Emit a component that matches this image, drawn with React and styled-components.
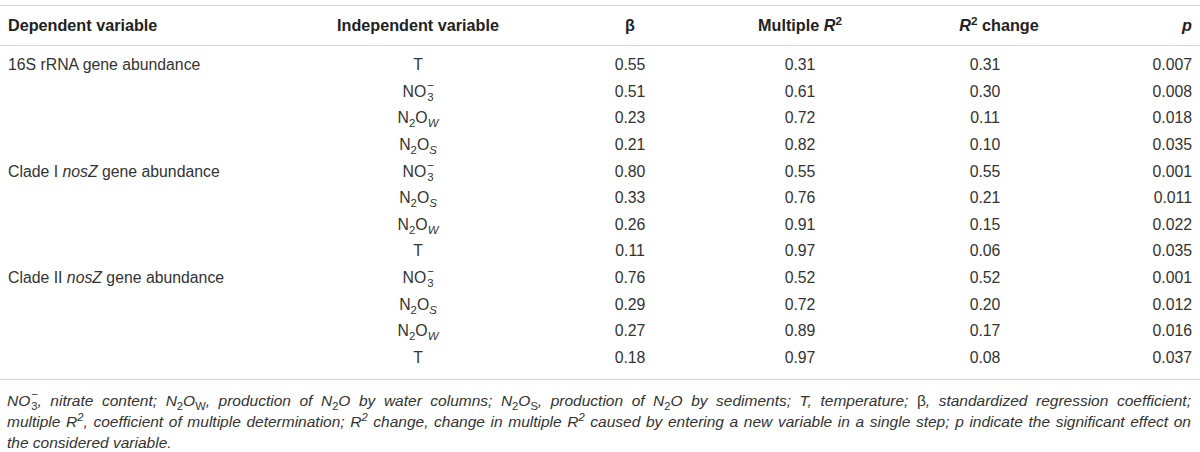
import React from "react";
import styled, { createGlobalStyle } from "styled-components";

const GlobalStyle = createGlobalStyle`
  body {
    margin: 0;
    background: #ffffff;
    font-family: "Liberation Sans", Arial, sans-serif;
    color: #333333;
  }
`;

const Page = styled.div`
  width: 1200px;
  padding-top: 5px;
`;

const Table = styled.table`
  width: 1200px;
  border-collapse: collapse;
  table-layout: fixed;
  border-top: 1px solid #d4d4d4;
  border-bottom: 1px solid #d4d4d4;
  font-size: 15.8px;
`;

const Head = styled.th`
  font-size: 16.2px;
  font-weight: bold;
  color: #222222;
  height: 39px;
  padding: 0 8px 0 ${(p) => p.indent || 8}px;
  text-align: ${(p) => p.align || "center"};
  border-bottom: 1px solid #d4d4d4;
  white-space: nowrap;
`;

const Row = styled.tr`
  &:first-child td {
    padding-top: 6px;
  }
  &:last-child td {
    padding-bottom: 8px;
  }
`;

const Cell = styled.td`
  height: 26.6px;
  padding: 0 8px;
  line-height: 18px;
  text-align: ${(p) => p.align || "center"};
  vertical-align: middle;
  white-space: nowrap;
`;

const Note = styled.div`
  padding: 10px 9px 0 7px;
  font-size: 15.5px;
  line-height: 21px;
  font-style: italic;
  color: #333333;
`;

const NoteLine = styled.div`
  white-space: nowrap;
  text-align: ${(p) => (p.last ? "left" : "justify")};
  text-align-last: ${(p) => (p.last ? "left" : "justify")};
`;

const Upright = styled.span`
  font-style: normal;
`;

const Sub = styled.sub`
  font-size: 0.72em;
  line-height: 0;
  font-style: ${(p) => (p.italic ? "italic" : "normal")};
`;

const Sup = styled.sup`
  font-size: 0.72em;
  line-height: 0;
`;

/* stacked charge over subscript, e.g. NO3 with a minus above the 3 */
const Stack = styled.span`
  position: relative;
  display: inline-block;
  line-height: 0;
  margin-left: 1px;
`;

const Charge = styled.span`
  position: absolute;
  left: 0;
  top: -0.62em;
  font-size: 0.72em;
  line-height: 0;
`;

const Ion = ({ n }) => (
  <Stack>
    <Sub>{n}</Sub>
    <Charge>−</Charge>
  </Stack>
);

const No3 = () => (
  <>
    NO
    <Ion n="3" />
  </>
);

const N2O = ({ x }) => (
  <>
    N<Sub>2</Sub>O<Sub italic>{x}</Sub>
  </>
);

const vars = {
  T: "T",
  NO3: <No3 />,
  W: <N2O x="W" />,
  S: <N2O x="S" />,
};

const groups = [
  {
    name: "16S rRNA gene abundance",
    rows: [
      ["T", "0.55", "0.31", "0.31", "0.007"],
      ["NO3", "0.51", "0.61", "0.30", "0.008"],
      ["W", "0.23", "0.72", "0.11", "0.018"],
      ["S", "0.21", "0.82", "0.10", "0.035"],
    ],
  },
  {
    name: (
      <>
        Clade I <i>nosZ</i> gene abundance
      </>
    ),
    rows: [
      ["NO3", "0.80", "0.55", "0.55", "0.001"],
      ["S", "0.33", "0.76", "0.21", "0.011"],
      ["W", "0.26", "0.91", "0.15", "0.022"],
      ["T", "0.11", "0.97", "0.06", "0.035"],
    ],
  },
  {
    name: (
      <>
        Clade II <i>nosZ</i> gene abundance
      </>
    ),
    rows: [
      ["NO3", "0.76", "0.52", "0.52", "0.001"],
      ["S", "0.29", "0.72", "0.20", "0.012"],
      ["W", "0.27", "0.89", "0.17", "0.016"],
      ["T", "0.18", "0.97", "0.08", "0.037"],
    ],
  },
];

export default function App() {
  return (
    <Page>
      <GlobalStyle />
      <Table>
        <colgroup>
          <col style={{ width: 300 }} />
          <col style={{ width: 236 }} />
          <col style={{ width: 188 }} />
          <col style={{ width: 152 }} />
          <col style={{ width: 218 }} />
          <col style={{ width: 106 }} />
        </colgroup>
        <thead>
          <tr>
            <Head align="left">Dependent variable</Head>
            <Head>Independent variable</Head>
            <Head>β</Head>
            <Head>
              Multiple <i>R</i>
              <Sup>2</Sup>
            </Head>
            <Head indent={36}>
              <i>R</i>
              <Sup>2</Sup> change
            </Head>
            <Head align="right">
              <i>p</i>
            </Head>
          </tr>
        </thead>
        <tbody>
          {groups.flatMap((g, gi) =>
            g.rows.map((r, ri) => (
              <Row key={`${gi}-${ri}`}>
                <Cell align="left">{ri === 0 ? g.name : ""}</Cell>
                <Cell>{vars[r[0]]}</Cell>
                <Cell>{r[1]}</Cell>
                <Cell>{r[2]}</Cell>
                <Cell>{r[3]}</Cell>
                <Cell align="right">{r[4]}</Cell>
              </Row>
            ))
          )}
        </tbody>
      </Table>
      <Note>
        <NoteLine>
          NO
          <Ion n="3" />, nitrate content; N<Sub>2</Sub>O<Sub>W</Sub>, production of
          N<Sub>2</Sub>O by water columns; N<Sub>2</Sub>O<Sub>S</Sub>, production of
          N<Sub>2</Sub>O by sediments; T, temperature; <Upright>β</Upright>,
          standardized regression coefficient;
        </NoteLine>
        <NoteLine>
          multiple R<Sup>2</Sup>, coefficient of multiple determination;
          R<Sup>2</Sup> change, change in multiple R<Sup>2</Sup> caused by entering a
          new variable in a single step; p indicate the significant effect on
        </NoteLine>
        <NoteLine last>the considered variable.</NoteLine>
      </Note>
    </Page>
  );
}
